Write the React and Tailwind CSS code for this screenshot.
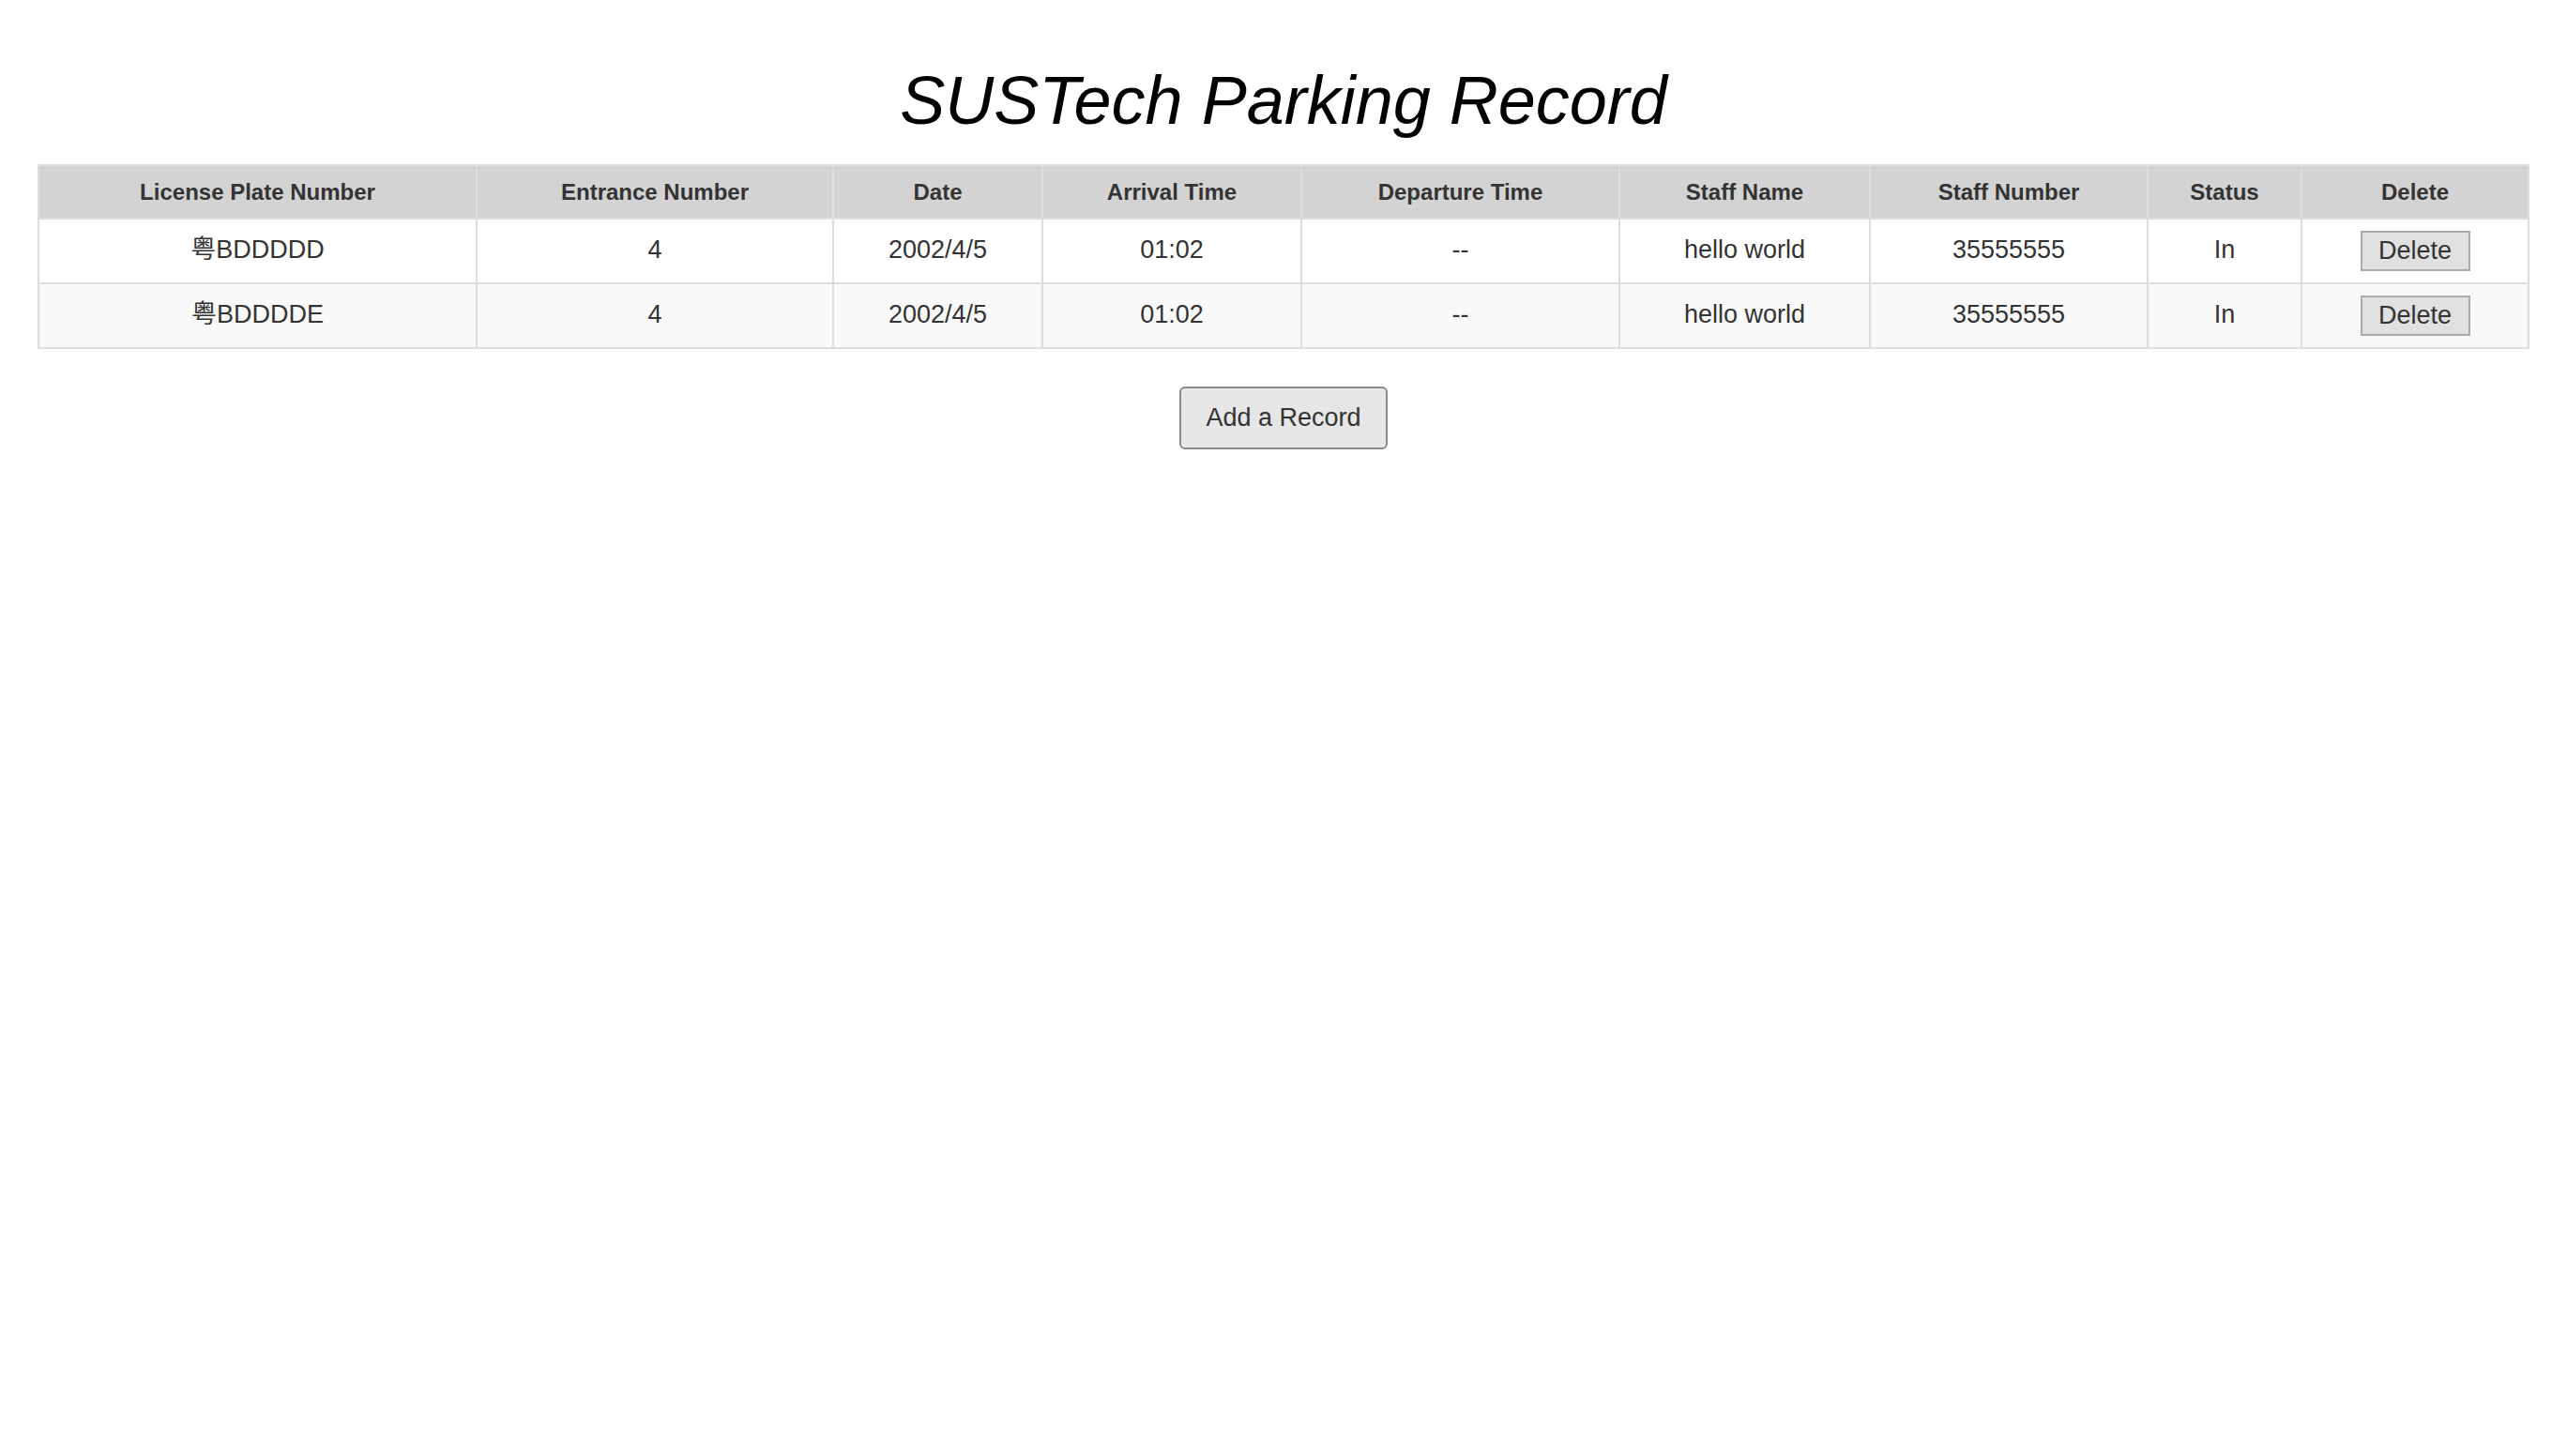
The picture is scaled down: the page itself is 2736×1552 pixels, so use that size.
import React from 'react';

const columns = [
  { label: 'License Plate Number', width: 'w-[467px]' },
  { label: 'Entrance Number', width: 'w-[380px]' },
  { label: 'Date', width: 'w-[223px]' },
  { label: 'Arrival Time', width: 'w-[276px]' },
  { label: 'Departure Time', width: 'w-[339px]' },
  { label: 'Staff Name', width: 'w-[267px]' },
  { label: 'Staff Number', width: 'w-[296px]' },
  { label: 'Status', width: 'w-[164px]' },
  { label: 'Delete', width: 'w-[242px]' },
];

const records = [
  { plate: '粤BDDDDD', entrance: 4, date: '2002/4/5', arrival: '01:02', departure: '--', staff: 'hello world', staffNo: '35555555', status: 'In' },
  { plate: '粤BDDDDE', entrance: 4, date: '2002/4/5', arrival: '01:02', departure: '--', staff: 'hello world', staffNo: '35555555', status: 'In' },
];

export default function App() {
  return (
    <div className="min-h-screen bg-white px-[40px] pt-[67px] text-[#333] font-['Liberation_Sans','Noto_Sans_CJK_SC',sans-serif]">
      <h1 className="text-center text-[72px] leading-[80px] italic text-black mb-[28px]">
        SUSTech Parking Record
      </h1>

      {/* Records table */}
      <table className="w-[calc(100%-3px)] table-fixed border-collapse border-2 border-[#ddd]">
        <colgroup>
          {columns.map((c) => (
            <col key={c.label} className={c.width} />
          ))}
        </colgroup>
        <thead>
          <tr className="h-[57px] bg-[#d3d3d3]">
            {columns.map((c) => (
              <th key={c.label} className="border-2 border-[#ddd] text-[24px] font-bold text-center align-middle p-0">
                {c.label}
              </th>
            ))}
          </tr>
        </thead>
        <tbody>
          {records.map((r, i) => (
            <tr key={r.plate} className={`h-[69px] ${i % 2 === 1 ? 'bg-[#f9f9f9]' : 'bg-white'}`}>
              <td className="border-2 border-[#ddd] text-[27px] text-center align-middle p-0 pb-[2px]">{r.plate}</td>
              <td className="border-2 border-[#ddd] text-[27px] text-center align-middle p-0 pb-[2px]">{r.entrance}</td>
              <td className="border-2 border-[#ddd] text-[27px] text-center align-middle p-0 pb-[2px]">{r.date}</td>
              <td className="border-2 border-[#ddd] text-[27px] text-center align-middle p-0 pb-[2px]">{r.arrival}</td>
              <td className="border-2 border-[#ddd] text-[27px] text-center align-middle p-0 pb-[2px]">{r.departure}</td>
              <td className="border-2 border-[#ddd] text-[27px] text-center align-middle p-0 pb-[2px]">{r.staff}</td>
              <td className="border-2 border-[#ddd] text-[27px] text-center align-middle p-0 pb-[2px]">{r.staffNo}</td>
              <td className="border-2 border-[#ddd] text-[27px] text-center align-middle p-0 pb-[2px]">{r.status}</td>
              <td className="border-2 border-[#ddd] text-center align-middle p-0">
                <button className="inline-flex items-center justify-center w-[117px] h-[43px] bg-[#e0e0e0] border-2 border-[#aaa] text-[27px] text-[#333]">
                  Delete
                </button>
              </td>
            </tr>
          ))}
        </tbody>
      </table>

      <div className="flex justify-center mt-[40px]">
        <button className="w-[222px] h-[67px] bg-[#e6e6e6] border-2 border-[#8a8a8a] rounded-[6px] text-[27px] text-[#333]">
          Add a Record
        </button>
      </div>
    </div>
  );
}
